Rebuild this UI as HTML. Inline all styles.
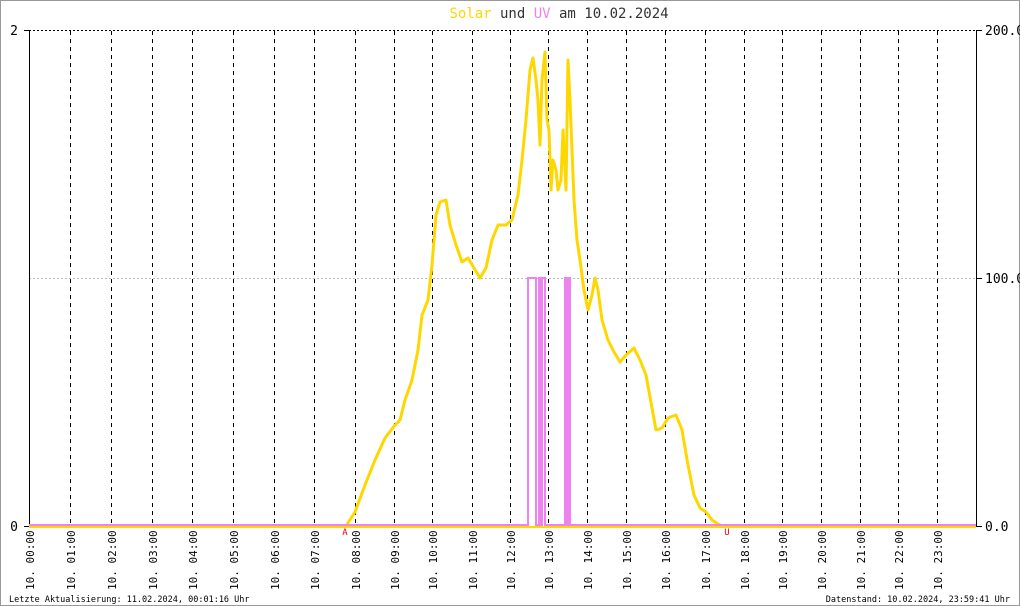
<!DOCTYPE html>
<html><head><meta charset="utf-8"><style>
html,body{margin:0;padding:0;background:#fff}
svg{display:block}
text{font-family:"DejaVu Sans Mono","Liberation Mono",monospace}
</style></head><body>
<svg width="1020" height="606" viewBox="0 0 1020 606" xmlns="http://www.w3.org/2000/svg">
<rect x="0.5" y="0.5" width="1019" height="605" fill="#fff" stroke="#999"/>
<text x="559" y="18" font-size="14" text-anchor="middle"><tspan fill="#ffd700">Solar</tspan><tspan fill="#333"> und </tspan><tspan fill="#ee82ee">UV</tspan><tspan fill="#333"> am 10.02.2024</tspan></text>
<line x1="29" y1="30.5" x2="976" y2="30.5" stroke="#000" stroke-dasharray="2,2"/>
<line x1="29" y1="278.5" x2="976" y2="278.5" stroke="#bbb" stroke-dasharray="2,2"/>
<g id="grid" stroke="#000" stroke-dasharray="4,4">
<line x1="70.5" y1="31" x2="70.5" y2="526"/><line x1="111.5" y1="31" x2="111.5" y2="526"/><line x1="152.5" y1="31" x2="152.5" y2="526"/><line x1="192.5" y1="31" x2="192.5" y2="526"/><line x1="233.5" y1="31" x2="233.5" y2="526"/><line x1="274.5" y1="31" x2="274.5" y2="526"/><line x1="314.5" y1="31" x2="314.5" y2="526"/><line x1="355.5" y1="31" x2="355.5" y2="526"/><line x1="394.5" y1="31" x2="394.5" y2="526"/><line x1="432.5" y1="31" x2="432.5" y2="526"/><line x1="472.5" y1="31" x2="472.5" y2="526"/><line x1="510.5" y1="31" x2="510.5" y2="526"/><line x1="548.5" y1="31" x2="548.5" y2="526"/><line x1="587.5" y1="31" x2="587.5" y2="526"/><line x1="626.5" y1="31" x2="626.5" y2="526"/><line x1="665.5" y1="31" x2="665.5" y2="526"/><line x1="705.5" y1="31" x2="705.5" y2="526"/><line x1="744.5" y1="31" x2="744.5" y2="526"/><line x1="782.5" y1="31" x2="782.5" y2="526"/><line x1="821.5" y1="31" x2="821.5" y2="526"/><line x1="860.5" y1="31" x2="860.5" y2="526"/><line x1="898.5" y1="31" x2="898.5" y2="526"/><line x1="937.5" y1="31" x2="937.5" y2="526"/>
</g>
<line x1="29.5" y1="30" x2="29.5" y2="527" stroke="#000"/>
<line x1="976.5" y1="30" x2="976.5" y2="527" stroke="#000"/>
<line x1="24" y1="30.5" x2="29" y2="30.5" stroke="#000"/>
<line x1="24" y1="526.5" x2="29" y2="526.5" stroke="#000"/>
<line x1="976" y1="30.5" x2="982" y2="30.5" stroke="#000"/>
<line x1="976" y1="278.5" x2="982" y2="278.5" stroke="#000"/>
<line x1="976" y1="526.5" x2="982" y2="526.5" stroke="#000"/>
<text x="14" y="35" font-size="13" text-anchor="middle" fill="#000">2</text>
<text x="14" y="531" font-size="13" text-anchor="middle" fill="#000">0</text>
<text x="985" y="35" font-size="13" fill="#000">200.0</text>
<text x="985" y="283" font-size="13" fill="#000">100.0</text>
<text x="985" y="531" font-size="13" fill="#000">0.0</text>
<line x1="29" y1="527" x2="976" y2="527" stroke="#ffd700" stroke-width="2"/>
<polyline fill="none" stroke="#ffd700" stroke-width="3" stroke-linejoin="round" points="346,526 355,512 365,485 375,460 385,438 395,425 400,420 405,400 412,380 418,350 422,315 428,300 432,265 436,215 440,202 446,200 450,225 456,245 462,262 468,258 474,268 480,278 486,268 492,240 498,225 506,225 512,220 518,195 522,160 526,120 530,70 533,58 536,80 538,100 540,145 542,80 545,52 547,120 549,130 551,190 553,160 556,170 558,190 561,180 563,130 566,190 568,60 570,100 572,150 574,200 577,240 580,260 584,290 588,310 592,295 595,278 598,290 602,320 608,340 614,352 620,362 626,355 634,348 640,360 646,375 652,408 656,430 662,428 668,418 676,415 682,430 688,465 694,495 700,508 706,512 712,520 718,524 722,526"/>
<polyline fill="none" stroke="#ee82ee" stroke-width="2" points="29,525 528,525 528,278 536,278 536,525 539,525 539,278 541,278 541,525 542,525 542,278 545,278 545,525 565,525 565,278 567,278 567,525 568,525 568,278 570,278 570,525 976,525"/>
<text x="345" y="535" font-size="9" fill="#e00" text-anchor="middle">A</text>
<text x="727" y="535" font-size="9" fill="#e00" text-anchor="middle">U</text>
<g font-size="11" fill="#000">
<text transform="translate(34,590) rotate(-90)">10. 00:00</text>
<text transform="translate(75,590) rotate(-90)">10. 01:00</text>
<text transform="translate(116,590) rotate(-90)">10. 02:00</text>
<text transform="translate(157,590) rotate(-90)">10. 03:00</text>
<text transform="translate(197,590) rotate(-90)">10. 04:00</text>
<text transform="translate(238,590) rotate(-90)">10. 05:00</text>
<text transform="translate(279,590) rotate(-90)">10. 06:00</text>
<text transform="translate(319,590) rotate(-90)">10. 07:00</text>
<text transform="translate(360,590) rotate(-90)">10. 08:00</text>
<text transform="translate(399,590) rotate(-90)">10. 09:00</text>
<text transform="translate(437,590) rotate(-90)">10. 10:00</text>
<text transform="translate(477,590) rotate(-90)">10. 11:00</text>
<text transform="translate(515,590) rotate(-90)">10. 12:00</text>
<text transform="translate(553,590) rotate(-90)">10. 13:00</text>
<text transform="translate(592,590) rotate(-90)">10. 14:00</text>
<text transform="translate(631,590) rotate(-90)">10. 15:00</text>
<text transform="translate(670,590) rotate(-90)">10. 16:00</text>
<text transform="translate(710,590) rotate(-90)">10. 17:00</text>
<text transform="translate(749,590) rotate(-90)">10. 18:00</text>
<text transform="translate(787,590) rotate(-90)">10. 19:00</text>
<text transform="translate(826,590) rotate(-90)">10. 20:00</text>
<text transform="translate(865,590) rotate(-90)">10. 21:00</text>
<text transform="translate(903,590) rotate(-90)">10. 22:00</text>
<text transform="translate(942,590) rotate(-90)">10. 23:00</text>
</g>
<text x="9" y="602" font-size="8.5" fill="#000">Letzte Aktualisierung: 11.02.2024, 00:01:16 Uhr</text>
<text x="1010" y="602" font-size="8.5" fill="#000" text-anchor="end">Datenstand: 10.02.2024, 23:59:41 Uhr</text>
</svg>
</body></html>
